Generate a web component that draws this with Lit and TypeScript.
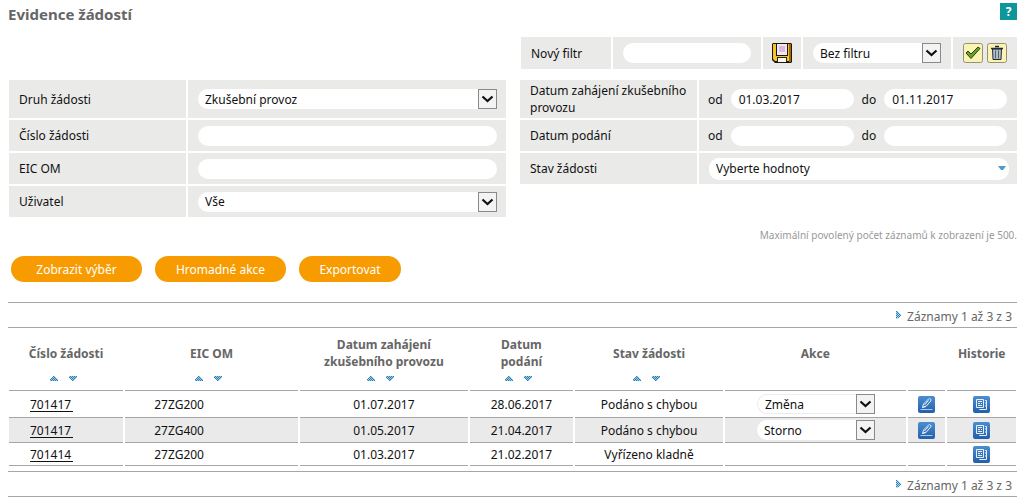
import { LitElement, html, css, svg, nothing } from "lit";
import { customElement, property } from "lit/decorators.js";

interface Row {
  id: string;
  eic: string;
  start: string;
  filed: string;
  state: string;
  action?: string;
}

const rows: Row[] = [
  { id: "701417", eic: "27ZG200", start: "01.07.2017", filed: "28.06.2017", state: "Podáno s chybou", action: "Změna" },
  { id: "701417", eic: "27ZG400", start: "01.05.2017", filed: "21.04.2017", state: "Podáno s chybou", action: "Storno" },
  { id: "701414", eic: "27ZG200", start: "01.03.2017", filed: "21.02.2017", state: "Vyřízeno kladně" },
];

const columns = [
  { title: "Číslo žádosti", sort: true },
  { title: "EIC OM", sort: true },
  { title: "Datum zahájení zkušebního provozu", sort: true },
  { title: "Datum podání", sort: true },
  { title: "Stav žádosti", sort: true },
  { title: "Akce", sort: false },
  { title: "", sort: false },
  { title: "Historie", sort: false },
];

const up = svg`<path d="M3 0h2v1h1v1h1v1h1v2H0V3h1V2h1V1h1z" fill="#9ccbe6"/><path d="M3 0h1v1H3zM4 1h1v1H4zM2 1h1v1H2zM1 2h1v1H1zM3 2h1v1H3zM5 2h1v1H5zM0 3h1v1H0zM2 3h1v1H2zM4 3h1v1H4zM6 3h1v1H6zM1 4h1v1H1zM3 4h1v1H3zM5 4h1v1H5zM7 4h1v1H7z" fill="#2f7fb5"/>`;
const down = svg`<path d="M0 0h8v2H7v1H6v1H5v1H3V4H2V3H1V2H0z" fill="#9ccbe6"/><path d="M1 0h1v1H1zM3 0h1v1H3zM5 0h1v1H5zM7 0h1v1H7zM0 1h1v1H0zM2 1h1v1H2zM4 1h1v1H4zM6 1h1v1H6zM1 2h1v1H1zM3 2h1v1H3zM5 2h1v1H5zM2 3h1v1H2zM4 3h1v1H4zM3 4h1v1H3z" fill="#2f7fb5"/>`;

/* Drop-down with a pill-shaped field and a square or plain arrow. */
@customElement("pill-select")
export class PillSelect extends LitElement {
  @property() value = "";
  @property() label = "";
  @property({ type: Boolean, reflect: true }) plain = false;
  @property({ type: Boolean, reflect: true }) framed = false;

  static styles = css`
    :host { display: grid; min-width: 0; }
    select, svg { grid-area: 1 / 1; }
    select {
      appearance: none; box-sizing: border-box; width: 100%; height: 20px; margin: 0;
      padding: 0 24px 0 7px; border: 0; border-radius: 10px 0 0 10px; background: #fff;
      font: inherit; color: #111;
    }
    svg { justify-self: end; pointer-events: none; }
    :host([plain]) select { border-radius: 10px; height: 22px; }
    :host([plain]) svg { align-self: center; margin-right: 3px; }
    :host([framed]) select { border: 1px solid #ececec; border-right: 0; }
  `;

  render() {
    return html`
      <select aria-label=${this.label}><option>${this.value}</option></select>
      ${this.plain
        ? html`<svg width="8" height="5" viewBox="0 0 8 5"><path d="M0 0h8L5 4H3z" fill="#4f9bcb"/></svg>`
        : html`<svg width="19" height="20" viewBox="0 0 19 20">
            <rect x="0.5" y="0.5" width="18" height="19" fill="#f3f3f3" stroke="#8a8a8a"/>
            <path d="M4.500 7.500l5 4.500 5-4.500" fill="none" stroke="#111" stroke-width="2.200"/>
          </svg>`}
    `;
  }
}

@customElement("app-root")
export class AppRoot extends LitElement {
  static styles = css`
    :host {
      display: block; box-sizing: border-box; padding: 3px 7px 0 8px; background: #fff;
      font: 12px/17px "Noto Sans", sans-serif; color: #111;
    }
    button, input { font: inherit; color: inherit; margin: 0; padding: 0; border: 0; background: none; }
    svg { display: block; }
    header { display: flex; justify-content: space-between; height: 34px; }
    h1 { margin: 1px 0 0; font-size: 15px; line-height: 20px; color: #666; }
    .help { width: 17px; height: 17px; background: #0d979b; color: #fff; font-weight: bold; font-size: 12px; line-height: 17px; }

    .columns {
      display: grid; grid-template-columns: minmax(0, 1fr) minmax(0, 1fr);
      column-gap: 14px; padding-left: 1px; align-items: start;
    }
    .presets {
      grid-column: 2; display: grid; gap: 2px; margin: 0 0 11px 1px;
      grid-template-columns: 90px minmax(0, 1fr) 38px minmax(0, 1fr) 64px;
    }
    .cell { background: #eaeae9; display: flex; align-items: center; min-height: 31px; padding: 0 10px; box-sizing: border-box; }
    .presets .cell { min-height: 32px; }
    .presets .tools { padding: 0; justify-content: center; gap: 4px; }
    .cell > input, .cell > pill-select { flex: 1; }
    input { box-sizing: border-box; min-width: 0; height: 20px; padding: 0 8px; border-radius: 10px; background: #fff; }
    .form { display: grid; grid-template-columns: 177px minmax(0, 1fr); gap: 2px; grid-template-rows: 38px; }
    .form .value { padding-right: 9px; }
    .form .range { gap: 8px; padding: 0 10px 0 9px; }
    .form .wide { padding-right: 8px; }
    .note { margin: 10px 0 12px; text-align: right; font-size: 10px; color: #999; }

    .actions { display: flex; gap: 13px; padding: 0 3px 20px; }
    .actions button { height: 26px; width: 131px; border-radius: 13px; background: #f79b00; color: #fff; }
    .actions .short { width: 102px; }

    .pager {
      display: flex; justify-content: flex-end; align-items: center; gap: 6px; height: 24px;
      padding-right: 5px; border: solid #a6a6a6; border-width: 1px 0; color: #666;
    }
    .pager span { padding-top: 3px; }
    .bottom { margin-top: 5px; }

    table { width: calc(100% + 2px); margin: 0 -1px; table-layout: fixed; border-spacing: 2px 0; text-align: center; }
    th, td { padding: 0; border-bottom: 1px solid #a6a6a6; }
    th { height: 62px; color: #666; vertical-align: top; }
    .title { display: flex; align-items: center; justify-content: center; height: 34px; padding: 8px 16px 0; }
    .sorts { display: flex; justify-content: center; gap: 11px; padding: 6px 6px 0 0; }
    td { height: 22px; }
    .first td { height: 26px; }
    .even td { height: 24px; background: #ebeaea; }
    .c1 { width: 11.5%; } .c2 { width: 17.4%; } .c3 { width: 16.9%; } .c4 { width: 10.4%; }
    .c5 { width: 14.9%; } .c6 { width: 18.2%; } .c7 { width: 3.8%; } .c8 { width: 6.9%; }
    td.id, td.eic { text-align: left; }
    td.id { padding-left: 21px; }
    td.eic { padding-left: 29px; }
    .id a {
      display: block; width: 43px; height: 15px; color: inherit; text-decoration: none;
      border-bottom: 1px solid #111;
    }
    .pick { width: 118px; margin-left: 32px; text-align: left; }
    td svg { margin: 0 auto; }
    td button { display: block; margin: 0 auto; }
  `;

  private field(label: string, id: string) {
    return html`<label class="cell" for=${id}>${label}</label>
      <div class="cell value"><input id=${id} /></div>`;
  }

  private range(label: string, id: string, from: string, to: string) {
    return html`<div class="cell">${label}</div>
      <div class="cell range">
        <label for=${id + "-from"}>od</label><input id=${id + "-from"} .value=${from} />
        <label for=${id + "-to"}>do</label><input id=${id + "-to"} .value=${to} />
      </div>`;
  }

  private pager(extra = "") {
    return html`<div class="pager ${extra}">
      <svg width="5" height="8" viewBox="0 0 5 8"><path d="M0 0h2v1h1v1h1v1h1v2H4v1H3v1H2v1H0z" fill="#b5d9ee"/><path d="M0 0h1v1H0zM1 1h1v1H1zM2 2h1v1H2zM3 3h1v1H3zM1 3h1v1H1zM2 4h1v1H2zM4 4h1v1H4zM3 5h1v1H3zM1 5h1v1H1zM2 6h1v1H2zM0 6h1v1H0zM0 2h1v1H0zM0 4h1v1H0z" fill="#2f7fb5"/></svg>
      <span>Záznamy 1 až 3 z 3</span>
    </div>`;
  }

  private history() {
    return html`<button aria-label="Historie">
      <svg width="17" height="17" viewBox="0 0 17 17">
        <defs><linearGradient id="h" x2="0" y2="1"><stop stop-color="#4b8fd0"/><stop offset="1" stop-color="#245ea9"/></linearGradient></defs>
        <rect width="17" height="17" rx="2" fill="url(#h)"/>
        <path d="M3.500 3.500h7v8h-7zM12 4.500h1.500v9h-7V13M5 5.500h4M5 7.500h2M8 7.500h1M5 9.500h4M12 7h1M12 10h1" fill="none" stroke="#e4f0fb"/>
      </svg></button>`;
  }

  private edit() {
    return html`<button aria-label="Upravit">
      <svg width="17" height="17" viewBox="0 0 17 17">
        <defs><linearGradient id="e" x2="0" y2="1"><stop stop-color="#4b8fd0"/><stop offset="1" stop-color="#245ea9"/></linearGradient></defs>
        <rect width="17" height="17" rx="2" fill="url(#e)"/>
        <path d="M4.500 11.500l1-3.500 5-5q1-.8 2 0t.2 2L8 10.500z M6.500 9l4-4.500M4.500 11.500l3-1.500" fill="none" stroke="#e4f0fb"/>
        <path d="M2.500 13.500h12" stroke="#a9cdf0"/>
      </svg></button>`;
  }

  render() {
    return html`
      <header><h1>Evidence žádostí</h1><button class="help" aria-label="Nápověda">?</button></header>
      <div class="columns">
        <div class="presets">
          <label class="cell" for="preset">Nový filtr</label>
          <div class="cell"><input id="preset" /></div>
          <div class="cell tools">
            <button aria-label="Uložit filtr"><svg width="20" height="20" viewBox="0 0 20 20">
              <path d="M1 0h18l1 1v18l-1 1H3l-3-3V1z" fill="#1d160c"/>
              <path d="M1 1h3v12h12V1h1v17H3l-2-2z" fill="#f5c527"/>
              <path d="M17 1h2v18h-2z" fill="#a06a14"/>
              <path d="M5 1h10v11H5z" fill="#f3e6f3"/><path d="M7 3h6v6H7z" fill="#dcb9e0"/>
              <path d="M5 14h10v5H5z" fill="#2b2115"/><path d="M6 15h8v4H6z" fill="#f7f7f7"/>
            </svg></button>
          </div>
          <div class="cell"><pill-select label="Filtr" value="Bez filtru"></pill-select></div>
          <div class="cell tools">
            <button aria-label="Použít filtr"><svg width="20" height="20" viewBox="0 0 20 20">
              <rect x="0.500" y="0.500" width="19" height="19" rx="2" fill="#fbf3b4" stroke="#96916f"/>
              <path d="M3 10l2-2 3 3 7-7 2 1.500-9 10z" fill="#6aa324" stroke="#24430e"/>
            </svg></button>
            <button aria-label="Smazat filtr"><svg width="20" height="20" viewBox="0 0 20 20">
              <rect x="0.500" y="0.500" width="19" height="19" rx="2" fill="#fbf3b4" stroke="#96916f"/>
              <path d="M5.500 6h9l-.5 10.500h-8z" fill="#aebccb" stroke="#242a33"/>
              <path d="M8 3.500h4M4 5.500h12" stroke="#242a33" stroke-width="1.600"/>
              <path d="M8.500 7.500v8M11.500 7.500v8" stroke="#53606e"/>
            </svg></button>
          </div>
        </div>
        <div class="form">
          <div class="cell">Druh žádosti</div>
          <div class="cell value"><pill-select label="Druh žádosti" value="Zkušební provoz"></pill-select></div>
          ${this.field("Číslo žádosti", "number")}
          ${this.field("EIC OM", "eic")}
          <div class="cell">Uživatel</div>
          <div class="cell value"><pill-select label="Uživatel" value="Vše"></pill-select></div>
        </div>
        <div class="form">
          ${this.range("Datum zahájení zkušebního provozu", "start", "01.03.2017", "01.11.2017")}
          ${this.range("Datum podání", "filed", "", "")}
          <div class="cell">Stav žádosti</div>
          <div class="cell wide"><pill-select plain label="Stav žádosti" value="Vyberte hodnoty"></pill-select></div>
        </div>
      </div>
      <p class="note">Maximální povolený počet záznamů k zobrazení je 500.</p>
      <div class="actions">
        <button>Zobrazit výběr</button><button>Hromadné akce</button><button class="short">Exportovat</button>
      </div>
      ${this.pager()}
      <table>
        <thead><tr>
          ${columns.map((c, i) => html`<th class="c${i + 1}">
            <div class="title">${c.title}</div>
            ${c.sort
              ? html`<div class="sorts">
                  <button aria-label="Vzestupně"><svg width="8" height="5" viewBox="0 0 8 5">${up}</svg></button>
                  <button aria-label="Sestupně"><svg width="8" height="5" viewBox="0 0 8 5">${down}</svg></button>
                </div>`
              : nothing}
          </th>`)}
        </tr></thead>
        <tbody>
          ${rows.map((r, i) => html`<tr class=${i === 0 ? "first" : i === 1 ? "even" : ""}>
            <td class="id"><a href="#">${r.id}</a></td>
            <td class="eic">${r.eic}</td>
            <td>${r.start}</td>
            <td>${r.filed}</td>
            <td>${r.state}</td>
            <td>${r.action ? html`<pill-select class="pick" ?framed=${i === 0} label="Akce" value=${r.action}></pill-select>` : nothing}</td>
            <td>${r.action ? this.edit() : nothing}</td>
            <td>${this.history()}</td>
          </tr>`)}
        </tbody>
      </table>
      ${this.pager("bottom")}
    `;
  }
}
